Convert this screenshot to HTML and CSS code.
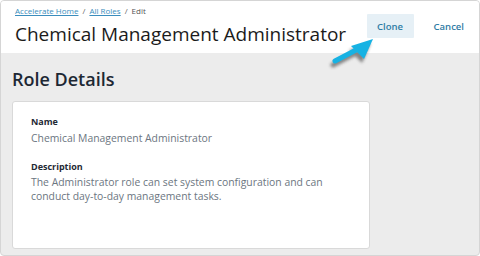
FILE: index.html
```html
<!DOCTYPE html>
<html>
<head>
<meta charset="utf-8">
<link rel="stylesheet" href="styles.css">
</head>
<body>
<div class="frame">
  <header class="header">
    <div class="heading">
      <nav class="crumbs"><a href="#">Accelerate Home</a><span class="sep">/</span><a href="#">All Roles</a><span class="sep">/</span><span class="current">Edit</span></nav>
      <h1 class="title">Chemical Management Administrator</h1>
    </div>
    <div class="actions">
      <button class="btn btn-clone">Clone</button>
      <button class="btn btn-cancel">Cancel</button>
    </div>
  </header>
  <main class="main">
    <h2 class="section-title">Role Details</h2>
    <section class="card">
      <div class="field">
        <div class="label">Name</div>
        <div class="value">Chemical Management Administrator</div>
      </div>
      <div class="field field-desc">
        <div class="label">Description</div>
        <div class="value">The Administrator role can set system configuration and can conduct day-to-day management tasks.</div>
      </div>
    </section>
  </main>
  <svg class="arrow" viewBox="320 30 60 45" width="60" height="45">
    <defs>
      <filter id="blur" x="-20%" y="-20%" width="140%" height="140%"><feGaussianBlur stdDeviation="1.4"/></filter>
    </defs>
    <g transform="translate(-2,4)" filter="url(#blur)" opacity="0.55" fill="#333" stroke="#333">
      <line x1="335" y1="61" x2="358" y2="49" stroke-width="5" stroke-linecap="round"/>
      <polygon points="373,39 351,46 364,59" stroke="none"/>
    </g>
    <g fill="#17b2e3" stroke="#17b2e3">
      <line x1="335" y1="61" x2="358" y2="49" stroke-width="5" stroke-linecap="round"/>
      <polygon points="373,39 351,46 364,59" stroke="none"/>
    </g>
  </svg>
</div>
</body>
</html>
```
FILE: styles.css
```css
html { background: #fff; }
body { margin: 0; font-family: "Open Sans", "Liberation Sans", sans-serif; }
.frame {
  position: relative;
  width: 480px;
  height: 256px;
  box-sizing: border-box;
  border: 1px solid #d5d5d5;
  border-radius: 4px;
  background: #ececec;
  overflow: hidden;
}
.header {
  background: #fff;
  display: flex;
  justify-content: space-between;
  align-items: flex-start;
  padding: 5px 6px 6px 14px;
  height: 52px;
  box-sizing: border-box;
}
.crumbs { font-size: 8px; line-height: 10px; color: #555; }
.crumbs a { color: #3a8dbd; text-decoration: underline; }
.crumbs .sep { margin: 0 4px; color: #666; }
.crumbs .current { color: #555; }
.title {
  margin: 5px 0 0;
  font-size: 19px;
  line-height: 26px;
  font-weight: 400;
  color: #1b1b1b;
}
.actions { display: flex; gap: 11px; margin-top: 8px; }
.btn {
  font-family: inherit;
  font-size: 9.5px;
  font-weight: 600;
  height: 24px;
  padding: 0 10.5px;
  border: 0;
  border-radius: 1px;
  color: #2f7ca5;
  background: transparent;
}
.btn-clone { background: #e6f0f6; }
.btn-cancel { padding: 0 9px; }
.main { padding: 0 11px; }
.section-title {
  margin: 14px 0 10px;
  font-size: 18px;
  line-height: 24px;
  font-weight: 600;
  color: #1d2834;
}
.card {
  width: 358px;
  height: 148px;
  box-sizing: border-box;
  background: #fff;
  border: 1px solid #d9d9d9;
  border-radius: 3px;
  padding: 14px 18px;
}
.label { font-size: 9px; line-height: 12px; font-weight: 700; color: #1f2a35; }
.value { margin-top: 3px; font-size: 10.4px; line-height: 14.5px; color: #6c7681; }
.field-desc { margin-top: 15px; }
.field-desc .value { margin-top: 2px; }
.arrow { position: absolute; left: 319px; top: 29px; }
```
